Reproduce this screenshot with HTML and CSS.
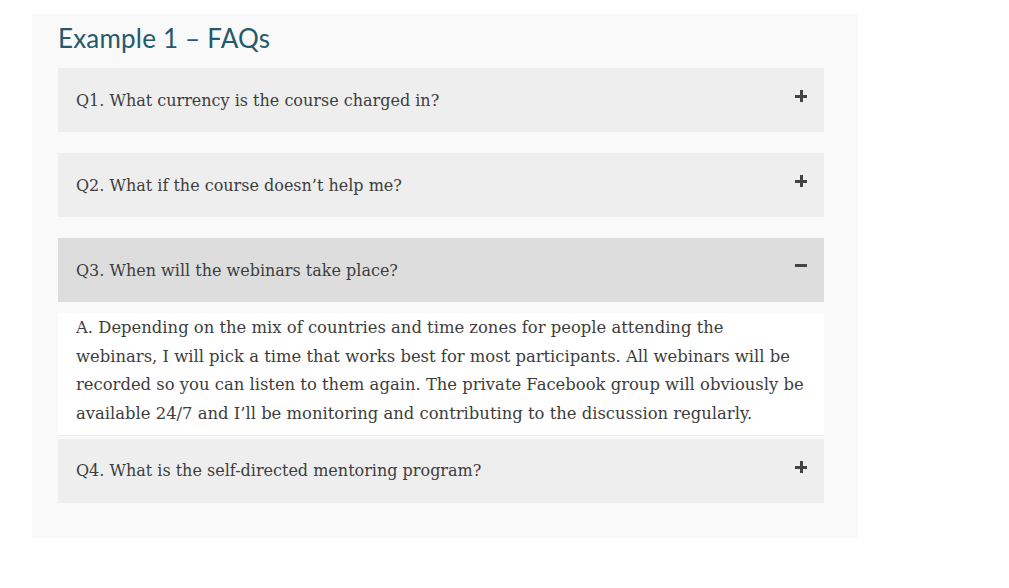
FILE: index.html
```html
<!DOCTYPE html>
<html>
<head>
<meta charset="utf-8">
<link rel="stylesheet" href="styles.css">
</head>
<body>
<div class="faq">
  <h2 class="title">Example 1 – FAQs</h2>
  <div class="item">
    <div class="q"><span>Q1. What currency is the course charged in?</span><span class="icon plus"></span></div>
  </div>
  <div class="item">
    <div class="q"><span>Q2. What if the course doesn’t help me?</span><span class="icon plus"></span></div>
  </div>
  <div class="item open">
    <div class="q"><span>Q3. When will the webinars take place?</span><span class="icon minus"></span></div>
    <div class="a"><p>A. Depending on the mix of countries and time zones for people attending the webinars, I will pick a time that works best for most participants. All webinars will be recorded so you can listen to them again. The private Facebook group will obviously be available 24/7 and I’ll be monitoring and contributing to the discussion regularly.</p></div>
  </div>
  <div class="item">
    <div class="q"><span>Q4. What is the self-directed mentoring program?</span><span class="icon plus"></span></div>
  </div>
</div>
</body>
</html>
```

FILE: styles.css
```css
html, body { margin: 0; padding: 0; background: #fff; }
body { padding: 14px 0 0 32px; }
.faq {
  width: 826px;
  box-sizing: border-box;
  background: #f9f9f9;
  padding: 7px 34px 14px 26px;
  display: flex;
  flex-direction: column;
}
.title {
  margin: 0 0 13px 0;
  font-family: "Lato", sans-serif;
  font-weight: 400;
  font-size: 26px;
  letter-spacing: 0.2px;
  line-height: 34px;
  color: #245a6d;
}
.item { display: flex; flex-direction: column; margin-bottom: 21px; }
.item.open { margin-bottom: 3px; }
.q {
  height: 64px;
  background: #eeeeee;
  box-sizing: border-box;
  padding: 0 17px 0 18px;
  display: flex;
  align-items: center;
  justify-content: space-between;
  font-family: "DejaVu Serif", serif;
  font-size: 16px;
  color: #3d3d3d;
}
.open .q { background: #dddddd; }
.icon { position: relative; width: 12px; height: 12px; align-self: flex-start; margin-top: 22px; }
.icon::before {
  content: ""; position: absolute; left: 0; top: 5px; width: 12px; height: 3px; background: #444;
}
.minus::before { top: 4px; }
.plus::after {
  content: ""; position: absolute; left: 5px; top: 0; width: 3px; height: 12px; background: #444;
}
.a {
  margin-top: 11px;
  background: #fff;
  padding: 1px 18px 6px 18px;
  font-family: "DejaVu Serif", serif;
  font-size: 16.4px;
  line-height: 28.7px;
  color: #3d3d3d;
  border-bottom: 1px solid #eeeeee;
}
.a p { margin: 0; max-width: 729px; }
```
